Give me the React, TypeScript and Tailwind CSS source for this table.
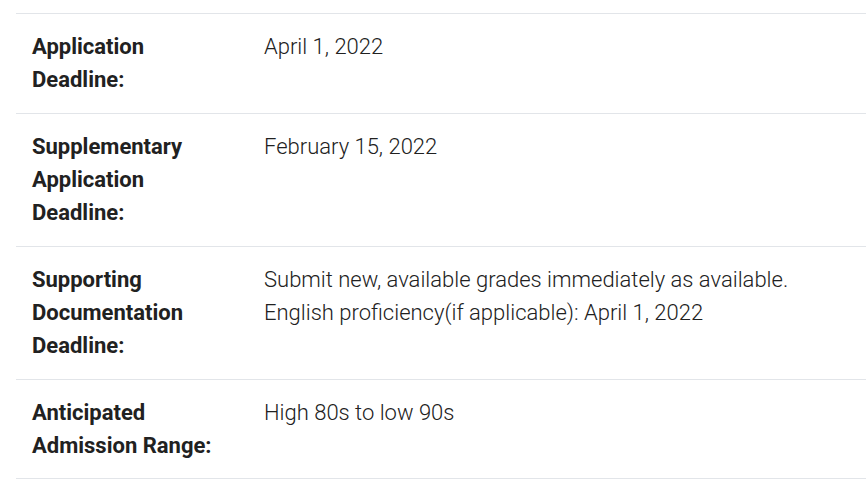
const ROWS: { label: string; value: string[] }[] = [
  { label: 'Application Deadline:', value: ['April 1, 2022'] },
  { label: 'Supplementary Application Deadline:', value: ['February 15, 2022'] },
  {
    label: 'Supporting Documentation Deadline:',
    value: [
      'Submit new, available grades immediately as available.',
      'English proficiency(if applicable): April 1, 2022',
    ],
  },
  { label: 'Anticipated Admission Range:', value: ['High 80s to low 90s'] },
];

export default function App() {
  return (
    <div className="min-h-screen bg-white pt-[13px] pl-4 font-['Roboto',sans-serif] text-[22px] leading-[33px] text-[#212121]">
      <div className="border-t border-[#e2e5e9]">
        {ROWS.map((row, i) => {
          const pad = i === ROWS.length - 1 ? 'pt-4 pb-4' : 'pt-4 pb-[17px]';
          return (
            <div key={row.label} className="flex border-b border-[#e2e5e9]">
              <div className={`w-[232px] shrink-0 px-4 font-bold ${pad}`}>{row.label}</div>
              <div className={`flex-1 px-4 font-light ${pad}`}>
                {row.value.map((line) => (
                  <div key={line}>{line}</div>
                ))}
              </div>
            </div>
          );
        })}
      </div>
    </div>
  );
}
